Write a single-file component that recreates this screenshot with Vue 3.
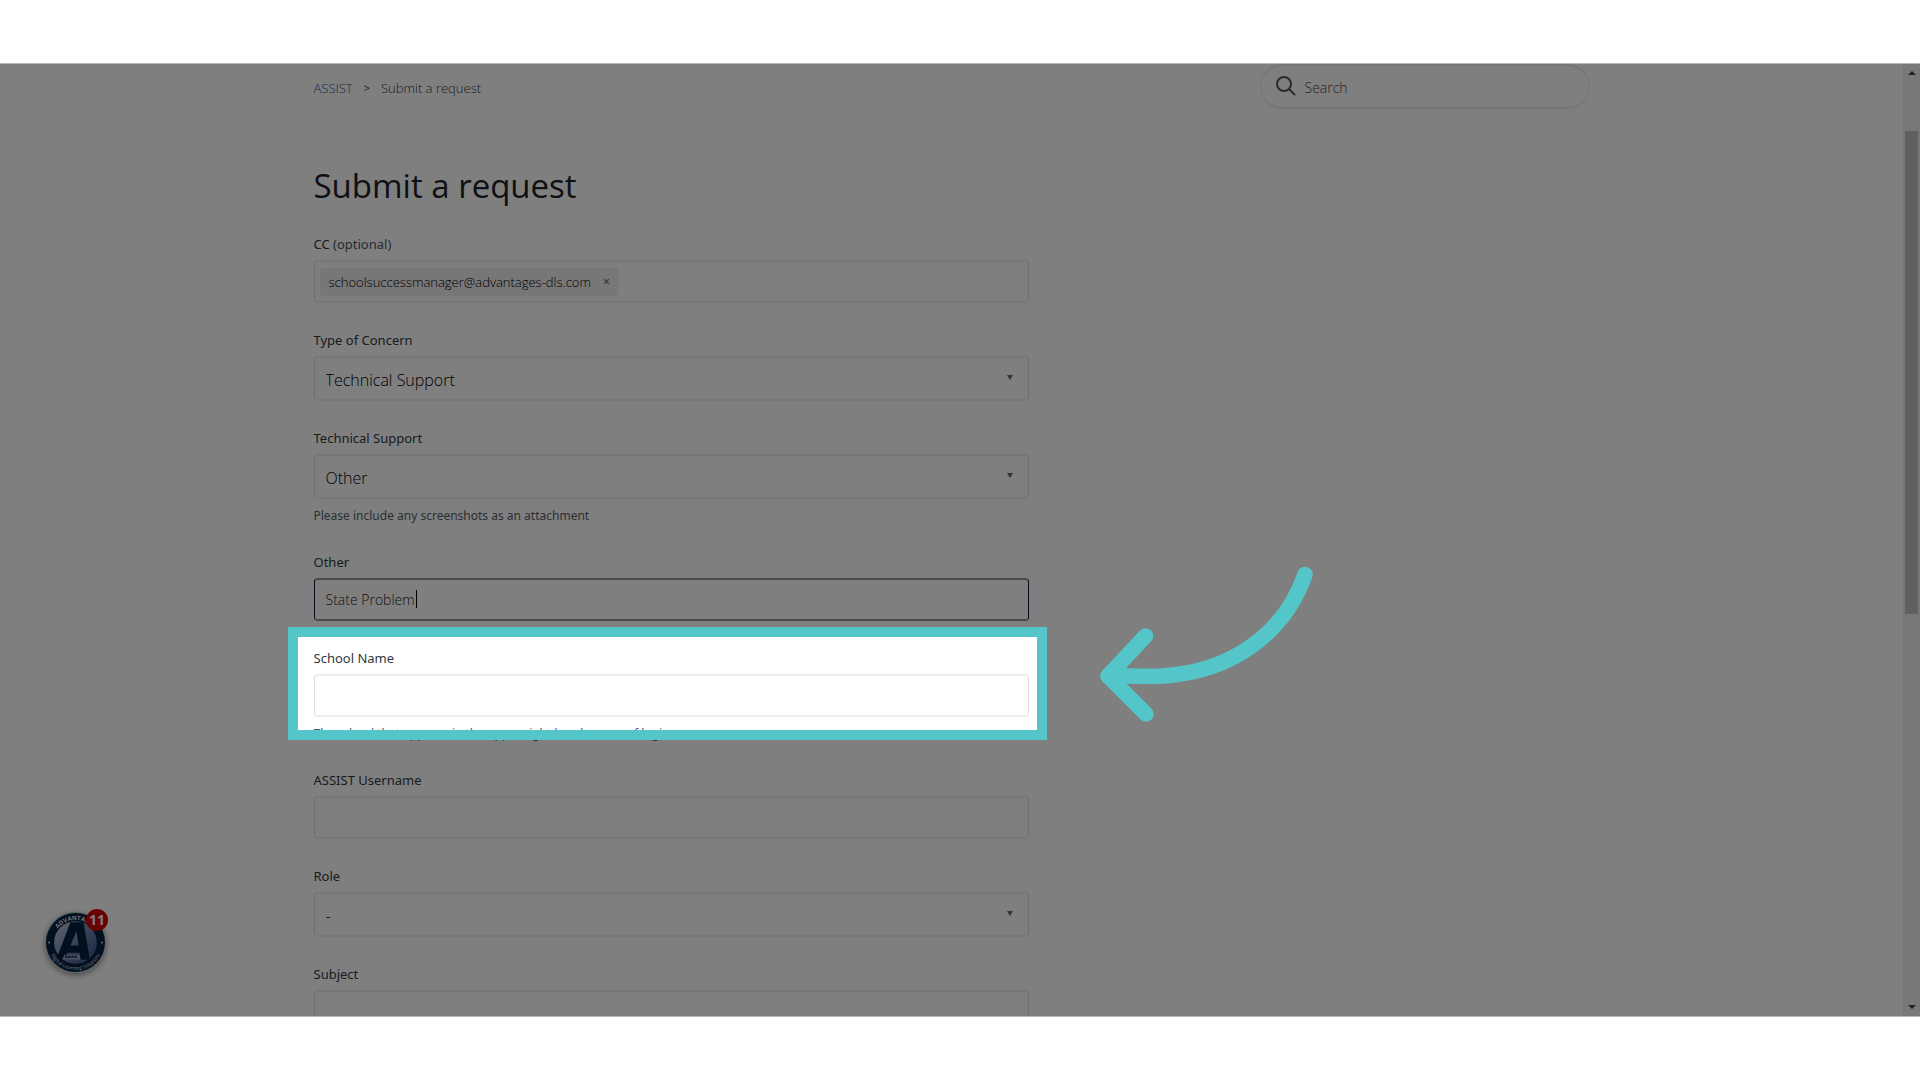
<script setup>
import { ref } from 'vue'

const query = ref('')
const form = ref({
  concern: 'Technical Support',
  support: 'Other',
  other: 'State Problem',
  school: '',
  username: '',
  role: '-',
  subject: '',
})
const recipients = ref(['schoolsuccessmanager@advantages-dls.com'])
const removeRecipient = (mail) => {
  recipients.value = recipients.value.filter((m) => m !== mail)
}
</script>

<template>
  <div class="stage">
    <div class="frame">
      <div class="page">
        <header class="topbar">
          <nav class="crumbs" aria-label="Breadcrumb">
            <a href="#">ASSIST</a>
            <span class="sep">&gt;</span>
            <span>Submit a request</span>
          </nav>
          <label class="search">
            <svg viewBox="0 0 20 20" aria-hidden="true">
              <circle cx="8" cy="8" r="7" />
              <path d="M13 13 L19 19" />
            </svg>
            <input v-model="query" type="search" placeholder="Search" aria-label="Search" />
          </label>
        </header>

        <h1>Submit a request</h1>

        <form class="form" @submit.prevent>
          <div class="field">
            <label for="cc">CC <span class="optional">(optional)</span></label>
            <div class="control tags">
              <span v-for="mail in recipients" :key="mail" class="tag">
                {{ mail }}
                <button type="button" aria-label="Remove" @click="removeRecipient(mail)">×</button>
              </span>
              <input id="cc" type="text" />
            </div>
          </div>

          <div class="field">
            <label for="concern">Type of Concern</label>
            <div class="picker">
              <select id="concern" v-model="form.concern" class="control">
                <option>Technical Support</option>
              </select>
            </div>
          </div>

          <div class="field">
            <label for="support">Technical Support</label>
            <div class="picker">
              <select id="support" v-model="form.support" class="control">
                <option>Other</option>
              </select>
            </div>
            <p class="hint">Please include any screenshots as an attachment</p>
          </div>

          <div class="field">
            <label for="other">Other</label>
            <div class="typing">
              <input id="other" v-model="form.other" class="control active" type="text" />
              <span class="cursor"></span>
            </div>
          </div>

          <div class="field spotlit">
            <label for="school">School Name</label>
            <input id="school" v-model="form.school" class="control" type="text" />
            <p class="hint">The school that appears in the upper right hand corner of login</p>
            <div class="spotlight"></div>
            <svg class="arrow" viewBox="0 0 250 190" aria-hidden="true">
              <path d="M225 24.5 C206 80 155 122 82 126 C64 126.5 46 126 28 126" />
              <path d="M65.5 86 L28 126 L66 164" />
            </svg>
          </div>

          <div class="field">
            <label for="username">ASSIST Username</label>
            <input id="username" v-model="form.username" class="control" type="text" />
          </div>

          <div class="field">
            <label for="role">Role</label>
            <div class="picker">
              <select id="role" v-model="form.role" class="control">
                <option>-</option>
              </select>
            </div>
          </div>

          <div class="field">
            <label for="subject">Subject</label>
            <input id="subject" v-model="form.subject" class="control" type="text" />
          </div>
        </form>
      </div>

      <div class="scrollbar" aria-hidden="true">
        <i class="up"></i>
        <i class="thumb"></i>
        <i class="down"></i>
      </div>

      <button class="widget" type="button" aria-label="Help">
        <svg viewBox="0 0 60 60" aria-hidden="true">
          <defs>
            <linearGradient id="disc" x1="0" y1="0" x2="1" y2="1">
              <stop offset="0" stop-color="#c4cce0" />
              <stop offset="0.5" stop-color="#7487ae" />
              <stop offset="1" stop-color="#26467e" />
            </linearGradient>
            <path id="arcTop" d="M8 30 A22 22 0 0 1 52 30" />
            <path id="arcBottom" d="M3 30 A27 27 0 0 0 57 30" />
          </defs>
          <circle cx="30" cy="30" r="30" fill="#b4bac4" />
          <circle cx="30" cy="30" r="29" fill="#03203f" />
          <circle cx="30" cy="30" r="21" fill="url(#disc)" />
          <path d="M25 10 H38 L44 47 H35 L34 40 H22 L19 47 H11 Z M31 19 L25 33 H33 Z" fill="#03203f" fill-rule="evenodd" />
          <path d="M19 42 H34 L35 47 H17 Z" fill="#8b9dc0" />
          <path d="M20 44 H32" stroke="#03203f" stroke-width="2" stroke-dasharray="2 1" />
          <circle cx="4" cy="30" r="1" fill="#d8dde6" />
          <circle cx="56" cy="30" r="1" fill="#d8dde6" />
          <text class="ring bold"><textPath href="#arcTop" startOffset="50%" text-anchor="middle">ADVANTAGES</textPath></text>
          <text class="ring"><textPath href="#arcBottom" startOffset="50%" text-anchor="middle">Digital Learning Solutions</textPath></text>
        </svg>
        <span class="badge">11</span>
      </button>
    </div>
  </div>
</template>

<style>
body {
  margin: 0;
  background: #fff;
}
</style>

<style scoped>
* {
  box-sizing: border-box;
}
.stage {
  height: 100vh;
  padding: 63px 0;
  font-family: "Open Sans", "Noto Sans", sans-serif;
  color: #2f3941;
}
.frame {
  position: relative;
  display: flex;
  height: 100%;
  overflow: hidden;
  border: solid #b9b9b9;
  border-width: 1px 0;
}
.page {
  flex: 1;
  min-width: 0;
}
.topbar,
h1,
.form {
  max-width: 1276px;
  margin: 0 auto;
}
.topbar {
  display: flex;
  align-items: flex-start;
  justify-content: space-between;
}
.crumbs {
  display: flex;
  gap: 11px;
  padding-top: 14px;
  font-size: 13px;
  line-height: 20px;
  font-weight: 300;
}
.crumbs a {
  color: #1f5596;
  text-decoration: none;
}
.sep {
  font-size: 11px;
  font-weight: 400;
}
.search {
  display: flex;
  align-items: center;
  gap: 9px;
  width: 330px;
  height: 45px;
  padding: 0 15px;
  border: solid #ececec;
  border-width: 2px 1px;
  border-radius: 23px;
}
.search svg {
  flex: none;
  width: 20px;
  height: 20px;
  margin-bottom: 1px;
  fill: none;
  stroke: #555;
  stroke-width: 2;
}
.search input {
  flex: 1;
  min-width: 0;
  padding: 2px 0 0;
  border: 0;
  outline: 0;
  background: none;
  font: 300 14px/20px "Open Sans", sans-serif;
}
.search input::placeholder {
  color: #444;
  opacity: 1;
}
h1 {
  padding: 52px 0 23px;
  font-size: 33px;
  line-height: 50px;
  font-weight: 400;
  color: #1c2227;
}
.field {
  max-width: 715px;
  margin-bottom: 27px;
}
.field > label {
  display: block;
  margin-bottom: 6px;
  font-family: "Noto Sans", "Open Sans", sans-serif;
  font-size: 13px;
  line-height: 20px;
}
.optional {
  color: #4c5863;
}
.control {
  display: block;
  width: 100%;
  height: 43px;
  padding: 0 11px;
  border: solid;
  border-width: 2px 1px;
  border-color: #eee #ddd;
  border-radius: 4px;
  outline: 0;
  background: #fff;
  color: #222;
  font: 300 14px/20px "Open Sans", sans-serif;
}
.active {
  border-color: #90909f #14183c;
}
.tags {
  display: flex;
  align-items: center;
  padding: 0 5px;
}
.tags input {
  flex: 1;
  min-width: 0;
  border: 0;
  outline: 0;
  background: none;
}
.tag {
  display: flex;
  align-items: center;
  gap: 12px;
  height: 28px;
  padding: 0 8px 0 9px;
  border-radius: 2px;
  background: #eee;
  color: #000;
  font-size: 13px;
  font-weight: 300;
}
.tag button {
  padding: 0;
  border: 0;
  background: none;
  color: #444;
  font: 12px/20px "Open Sans", sans-serif;
}
.picker,
.typing {
  position: relative;
}
.picker select {
  height: 45px;
  padding-top: 3px;
  appearance: none;
  color: #000;
  font-size: 16px;
}
.picker::after {
  content: "";
  position: absolute;
  top: 19px;
  right: 16px;
  border: solid transparent;
  border-width: 5px 3px 0;
  border-top-color: #666;
}
.cursor {
  position: absolute;
  top: 12px;
  left: 102px;
  width: 1px;
  height: 18px;
  background: #000;
}
.hint {
  margin: 7px 0 -1px;
  font-family: "Noto Sans", "Open Sans", sans-serif;
  font-size: 12px;
  line-height: 20px;
  color: #555f6a;
}
.spotlit {
  position: relative;
  display: flow-root;
}
/* Dims everything around the highlighted field */
.spotlight {
  position: absolute;
  z-index: 5;
  inset: -21px -18px 3px -26px;
  border: 10px solid #54c5c8;
  box-shadow: 0 0 0 3000px rgba(0, 0, 0, 0.5);
  pointer-events: none;
}
.arrow {
  position: absolute;
  z-index: 6;
  top: -98px;
  left: 766px;
  width: 250px;
  height: 190px;
  fill: none;
  stroke: #54c5c8;
  stroke-width: 15.5;
  stroke-linecap: round;
  stroke-linejoin: round;
}
.scrollbar {
  display: flex;
  flex-direction: column;
  align-items: center;
  width: 17px;
  padding: 7px 0;
  background: #f1f1f1;
}
.up,
.down {
  border: solid transparent;
}
.up {
  border-width: 0 4px 4px;
  border-bottom-color: #404040;
}
.down {
  margin-top: auto;
  border-width: 4px 4px 0;
  border-top-color: #404040;
}
.thumb {
  width: 13px;
  height: 483px;
  margin-top: 56px;
  background: #c1c1c1;
}
.widget {
  position: absolute;
  left: 45px;
  bottom: 43px;
  width: 61px;
  height: 61px;
  padding: 0;
  border: 0;
  border-radius: 50%;
  background: none;
  box-shadow: 0 2px 6px rgba(0, 0, 0, 0.45);
}
.widget svg {
  display: block;
}
.ring {
  font: 5px "Open Sans", sans-serif;
  fill: #d8dde6;
}
.bold {
  font-size: 6px;
  font-weight: 700;
}
.badge {
  position: absolute;
  top: -3px;
  right: -2px;
  width: 22px;
  height: 22px;
  border-radius: 50%;
  background: #d60000;
  color: #fff;
  font: 700 14px/22px "Open Sans", sans-serif;
  text-align: center;
}
</style>
